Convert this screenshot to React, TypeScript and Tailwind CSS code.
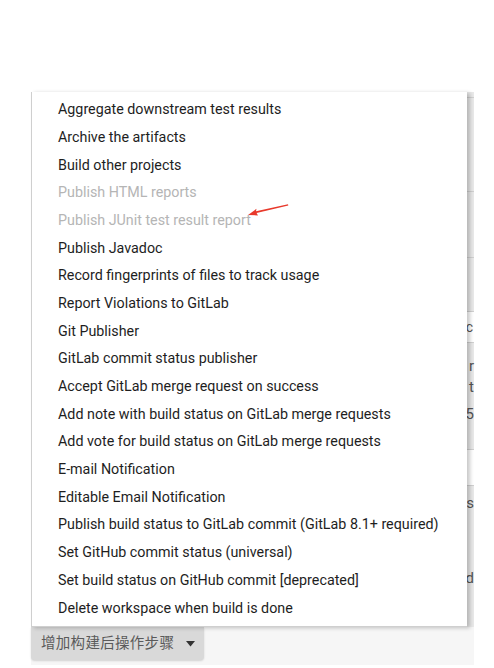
import React from "react";

const items: { label: string; disabled?: boolean }[] = [
  { label: "Aggregate downstream test results" },
  { label: "Archive the artifacts" },
  { label: "Build other projects" },
  { label: "Publish HTML reports", disabled: true },
  { label: "Publish JUnit test result report", disabled: true },
  { label: "Publish Javadoc" },
  { label: "Record fingerprints of files to track usage" },
  { label: "Report Violations to GitLab" },
  { label: "Git Publisher" },
  { label: "GitLab commit status publisher" },
  { label: "Accept GitLab merge request on success" },
  { label: "Add note with build status on GitLab merge requests" },
  { label: "Add vote for build status on GitLab merge requests" },
  { label: "E-mail Notification" },
  { label: "Editable Email Notification" },
  { label: "Publish build status to GitLab commit (GitLab 8.1+ required)" },
  { label: "Set GitHub commit status (universal)" },
  { label: "Set build status on GitHub commit [deprecated]" },
  { label: "Delete workspace when build is done" },
];

export default function App() {
  return (
    <div
      className="w-[494px] h-[668px] bg-white overflow-hidden pt-[92px] pl-[31px]"
      style={{ fontFamily: "Roboto, 'Noto Sans CJK SC', sans-serif" }}
    >
      <div className="relative w-[443px]">
        {/* background page behind the menu */}
        <div className="flex flex-col h-[535px] bg-[#e9e9e9] text-[14px] text-[#555]">
          <div className="h-[6px] border-b border-[#d0d0d0]" />
          <div className="h-[94px] border-b border-[#d0d0d0]" />
          <div className="h-[66px] border-b border-[#d0d0d0]" />
          <div className="h-[54px] border-b border-[#d0d0d0]" />
          <div className="h-[31px] bg-white border-b border-[#d0d0d0] flex items-center justify-end pr-[1px]">
            <span className="leading-none">)c</span>
          </div>
          <div className="h-[107px] border-b border-[#d0d0d0] flex flex-col items-end pt-[16px] gap-[6px] text-[15px] leading-none">
            <span>r</span>
            <span>t</span>
            <span className="pt-[6px]">'5</span>
          </div>
          <div className="h-[36px] bg-white border-b border-[#d0d0d0]" />
          <div className="flex-1 flex flex-col items-end pt-[10px] text-[15px] leading-none">
            <span>s</span>
            <span className="pt-[60px]">d</span>
          </div>
        </div>
        {/* bottom band with button */}
        <div className="h-[38px] bg-[#f6f6f6]">
          <button className="h-[33px] w-[173px] bg-[#d9d9d9] rounded-b-[4px] shadow-[0_1px_2px_rgba(0,0,0,0.15)] flex items-center pl-[10px] gap-[12px] text-[14.5px] text-[#5a5a5a]">
            <span className="tracking-[0.3px]">增加构建后操作步骤</span>
            <svg width="9" height="6" viewBox="0 0 9 6">
              <polygon points="0,0 9,0 4.5,5.5" fill="#333" />
            </svg>
          </button>
        </div>

        {/* dropdown menu overlay */}
        <div className="absolute top-0 left-0 w-[436px] h-[535px] bg-white border-l border-b border-[#cfcfcf] shadow-[3px_1px_4px_rgba(0,0,0,0.22)] pt-[4px]">
          {items.map((it) => (
            <div
              key={it.label}
              className={
                "h-[27.7px] flex items-center pl-[26px] text-[14.3px] whitespace-nowrap " +
                (it.disabled ? "text-[#b5b5b5]" : "text-[#1e1e1e]")
              }
            >
              {it.label}
            </div>
          ))}
          <svg
            className="absolute left-[214px] top-[110px]"
            width="44"
            height="14"
            viewBox="0 0 44 14"
          >
            <polygon
              points="2,13 10.5,6.8 10,9.2 42,2.2 42.3,3.6 10.6,11 12,13.4"
              fill="#e8392b"
            />
          </svg>
        </div>
      </div>
    </div>
  );
}
